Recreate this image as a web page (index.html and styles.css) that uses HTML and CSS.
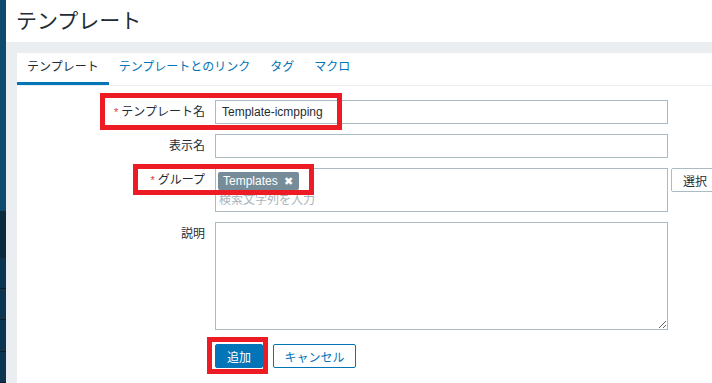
FILE: index.html
```html
<!DOCTYPE html>
<html lang="ja">
<head>
    <meta charset="UTF-8">
    <meta name="viewport" content="width=device-width, initial-scale=1.0">
    <title>テンプレート</title>
    <link rel="stylesheet" href="styles.css">
</head>
<body>
    <div class="layout">
        <aside class="sidebar">
            <div class="side-top"></div>
            <div class="side-dark"></div>
            <div class="side-item"></div>
            <div class="side-item"></div>
            <div class="side-item"></div>
            <div class="side-item"></div>
        </aside>

        <div class="main">
            <header class="page-header">
                <h1>テンプレート</h1>
            </header>

            <div class="content">
                <div class="panel">
                    <ul class="tabs">
                        <li class="tab active">テンプレート</li>
                        <li class="tab">テンプレートとのリンク</li>
                        <li class="tab">タグ</li>
                        <li class="tab">マクロ</li>
                    </ul>

                    <form class="form">
                        <label class="form-label"><span class="req">*</span>テンプレート名</label>
                        <div class="form-field">
                            <input class="text-input" type="text" value="Template-icmpping">
                        </div>

                        <label class="form-label">表示名</label>
                        <div class="form-field">
                            <input class="text-input" type="text">
                        </div>

                        <label class="form-label"><span class="req">*</span>グループ</label>
                        <div class="form-field field-row">
                            <div class="multiselect">
                                <span class="tag">Templates <span class="tag-x">✖</span></span>
                                <div class="placeholder">検索文字列を入力</div>
                            </div>
                            <button type="button" class="btn-select">選択</button>
                        </div>

                        <label class="form-label">説明</label>
                        <div class="form-field">
                            <textarea class="text-area"></textarea>
                        </div>

                        <div></div>
                        <div class="form-actions">
                            <button type="button" class="btn btn-primary">追加</button>
                            <button type="button" class="btn btn-outline">キャンセル</button>
                        </div>
                    </form>
                </div>
            </div>
        </div>
    </div>

    <!-- 注釈の赤枠 -->
    <div class="mark mark-name"></div>
    <div class="mark mark-group"></div>
    <div class="mark mark-add"></div>
</body>
</html>
```

FILE: styles.css
```css
* {
    margin: 0;
    padding: 0;
    box-sizing: border-box;
    font-family: "Liberation Sans", "Noto Sans CJK JP", sans-serif;
}

body {
    background: #ebeef0;
    color: #1f2c33;
    overflow: hidden;
    height: 383px;
}

.layout {
    display: flex;
    height: 383px;
}

.sidebar {
    width: 6px;
    flex-shrink: 0;
    display: flex;
    flex-direction: column;
    background: #0c3550;
}

.side-top {
    height: 215px;
    background: #0e4a6d;
}

.side-dark {
    height: 48px;
    background: #0a2a3e;
}

.side-item {
    height: 32px;
    border-bottom: 1px solid #071e2c;
}

.main {
    flex: 1;
    min-width: 0;
}

.page-header {
    background: white;
    height: 42px;
    padding-left: 10px;
    display: flex;
    align-items: center;
}

.page-header h1 {
    font-size: 21px;
    font-weight: normal;
    line-height: 1;
    margin-top: -2px;
}

.content {
    padding: 11px 0 0 11px;
}

.panel {
    background: white;
    height: 340px;
    overflow: hidden;
}

.tabs {
    list-style: none;
    display: flex;
    border-bottom: 1px solid #ebeef0;
}

.tab {
    padding: 0 10px;
    font-size: 12px;
    line-height: 29px;
    color: #0275b8;
    border-bottom: 3px solid transparent;
}

.tab.active {
    color: #1f2c33;
    border-bottom-color: #0275b8;
}

.form {
    display: grid;
    grid-template-columns: 188px 1fr;
    column-gap: 10px;
    row-gap: 10px;
    padding-top: 14px;
}

.form-label {
    text-align: right;
    font-size: 12px;
    line-height: 24px;
}

.req {
    color: #e33734;
    font-size: 11px;
    margin-right: 3px;
}

.form-field {
    display: flex;
}

.text-input {
    width: 453px;
    height: 24px;
    border: 1px solid #acbbc2;
    padding: 0 6px;
    font-size: 12px;
    color: #1f2c33;
}

.field-row {
    gap: 3px;
    align-items: flex-start;
}

.multiselect {
    width: 453px;
    flex-shrink: 0;
    height: 44px;
    border: 1px solid #acbbc2;
    padding: 2px;
}

.tag {
    display: inline-block;
    background: #768d99;
    color: white;
    font-size: 12px;
    line-height: 18px;
    padding: 0 6px 0 5px;
    border-radius: 2px;
}

.tag-x {
    font-size: 11px;
    margin-left: 3px;
}

.placeholder {
    color: #a8b4ba;
    font-size: 12px;
    line-height: 18px;
    padding-left: 1px;
    margin-top: 1px;
}

.btn-select {
    flex-shrink: 0;
    height: 24px;
    padding: 0 11px;
    border: 1px solid #acbbc2;
    background: white;
    font-size: 12px;
    color: #1f2c33;
    border-radius: 2px;
    white-space: nowrap;
}

.text-area {
    width: 453px;
    height: 108px;
    border: 1px solid #acbbc2;
    resize: both;
}

.form-actions {
    display: flex;
    gap: 10px;
    padding-top: 4px;
}

.btn {
    height: 24px;
    font-size: 12px;
    border-radius: 2px;
    padding: 0;
    white-space: nowrap;
}

.btn-primary {
    width: 48px;
    background: #0275b8;
    border: 1px solid #0275b8;
    color: white;
}

.btn-outline {
    width: 83px;
    background: white;
    border: 1px solid #0275b8;
    color: #0275b8;
}

.mark {
    position: absolute;
    border: 5px solid #ed1c24;
}

.mark-name {
    left: 100px;
    top: 93px;
    width: 242px;
    height: 37px;
}

.mark-group {
    left: 133px;
    top: 164px;
    width: 181px;
    height: 31px;
}

.mark-add {
    left: 207px;
    top: 337px;
    width: 61px;
    height: 37px;
}
```
